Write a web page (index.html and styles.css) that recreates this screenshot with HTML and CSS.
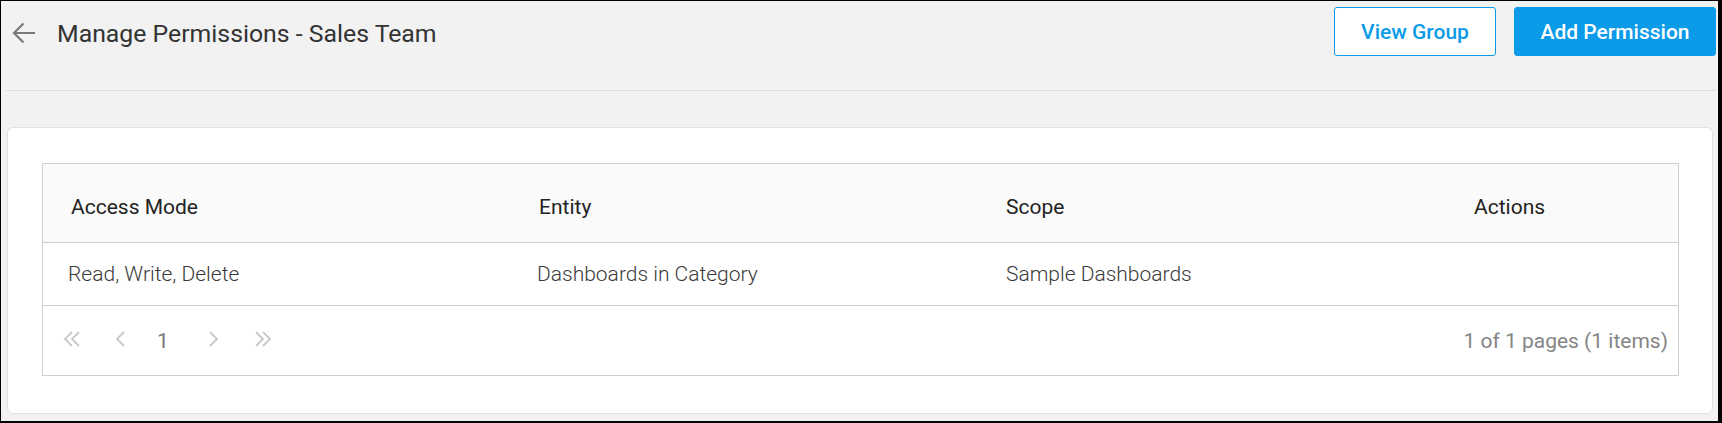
FILE: index.html
```html
<!DOCTYPE html>
<html lang="en">
<head>
<meta charset="utf-8">
<title>Manage Permissions - Sales Team</title>
<link rel="stylesheet" href="styles.css">
</head>
<body>
<div class="frame">
  <header class="topbar">
    <div class="title-group">
      <svg class="back" width="24" height="22" viewBox="0 0 24 22" aria-hidden="true">
        <path d="M23 11 H2.2 M11.5 1.5 L2 11 L11.5 20.5" fill="none" stroke="#7a7a7a" stroke-width="2.2"/>
      </svg>
      <h1 class="title">Manage Permissions - Sales Team</h1>
    </div>
    <div class="actions">
      <button class="btn btn-outline">View Group</button>
      <button class="btn btn-primary">Add Permission</button>
    </div>
  </header>
  <main class="card">
    <div class="grid">
      <div class="grid-head">
        <div class="cell">Access Mode</div>
        <div class="cell">Entity</div>
        <div class="cell">Scope</div>
        <div class="cell">Actions</div>
      </div>
      <div class="grid-row">
        <div class="cell">Read, Write, Delete</div>
        <div class="cell">Dashboards in Category</div>
        <div class="cell">Sample Dashboards</div>
        <div class="cell"></div>
      </div>
      <div class="pager">
        <div class="pager-nav">
          <svg class="chev chev-first" width="18" height="16" viewBox="0 0 18 16" aria-hidden="true">
            <polyline points="9,1 2,8 9,15" />
            <polyline points="16,1 9,8 16,15" />
          </svg>
          <svg class="chev chev-prev" width="10" height="16" viewBox="0 0 10 16" aria-hidden="true">
            <polyline points="9,1 2,8 9,15" />
          </svg>
          <span class="page-num">1</span>
          <svg class="chev chev-next" width="10" height="16" viewBox="0 0 10 16" aria-hidden="true">
            <polyline points="1,1 8,8 1,15" />
          </svg>
          <svg class="chev chev-last" width="18" height="16" viewBox="0 0 18 16" aria-hidden="true">
            <polyline points="2,1 9,8 2,15" />
            <polyline points="9,1 16,8 9,15" />
          </svg>
        </div>
        <div class="pager-info">1 of 1 pages (1 items)</div>
      </div>
    </div>
  </main>
</div>
</body>
</html>
```
FILE: styles.css
```css
html, body {
  margin: 0;
  padding: 0;
  background: #000;
}

.frame {
  box-sizing: border-box;
  width: 1722px;
  height: 423px;
  border-style: solid;
  border-color: #000;
  border-width: 1px 4px 2px 1px;
  background: #f2f2f2;
  padding: 0 2px 0 5px;
  font-family: Roboto, "Liberation Sans", sans-serif;
  display: flex;
  flex-direction: column;
}

.topbar {
  box-sizing: border-box;
  height: 90px;
  padding-top: 6px;
  border-bottom: 1px solid #dcdcdc;
  display: flex;
  justify-content: space-between;
  align-items: flex-start;
}

.title-group {
  height: 49px;
  display: flex;
  align-items: center;
  margin-left: 6px;
}

.back {
  display: block;
  margin-top: 2px;
}

.title {
  margin: 0 0 0 21px;
  padding-top: 5px;
  font-size: 24.8px;
  line-height: 30px;
  font-weight: 400;
  color: #333;
  white-space: nowrap;
}

.actions {
  display: flex;
  gap: 18px;
}

.btn {
  box-sizing: border-box;
  height: 49px;
  padding: 0;
  border: 1px solid #0b9be8;
  border-radius: 3px;
  font-family: Roboto, "Liberation Sans", sans-serif;
  font-size: 21px;
  font-weight: 500;
  white-space: nowrap;
  cursor: pointer;
}

.btn-outline {
  width: 162px;
  background: #fff;
  color: #0b9be8;
}

.btn-primary {
  width: 202px;
  background: #0b9be8;
  color: #fff;
}

.card {
  margin: 36px 3px 0 1px;
  background: #fff;
  border: 1px solid #e2e2e2;
  border-radius: 6px;
  padding: 35px 33px 37px 34px;
}

.grid {
  border: 1px solid #cfcfcf;
}

.grid-head,
.grid-row {
  display: grid;
  grid-template-columns: 467px 467px 468px 1fr;
  align-items: center;
  border-bottom: 1px solid #cfcfcf;
  box-sizing: border-box;
}

.grid-head {
  height: 79px;
  padding-top: 8px;
  background: #fafafa;
  color: #222;
  font-size: 21px;
  font-weight: 400;
}

.grid-head .cell {
  padding-left: 29px;
}

.grid-head .cell:first-child {
  padding-left: 28px;
}

.grid-row {
  height: 63px;
  color: #3a3a3a;
  font-size: 21px;
  font-weight: 300;
}

.grid-row .cell {
  padding-left: 27px;
}

.grid-row .cell:first-child {
  padding-left: 25px;
}

.grid-row .cell:nth-child(3) {
  padding-left: 29px;
}

.pager {
  height: 69px;
  display: flex;
  align-items: center;
  justify-content: space-between;
  padding: 0 10px 0 20px;
}

.pager-nav {
  display: flex;
  align-items: center;
}

.chev {
  display: block;
  margin-bottom: 4px;
  fill: none;
  stroke: #c8c8c8;
  stroke-width: 1.8;
}

.chev-prev { margin-left: 34px; }
.chev-next { margin-left: 40px; }
.chev-last { margin-left: 35px; }

.page-num {
  margin-left: 32px;
  font-size: 21px;
  color: #777;
}

.pager-info {
  font-size: 21px;
  color: #858585;
}
```
